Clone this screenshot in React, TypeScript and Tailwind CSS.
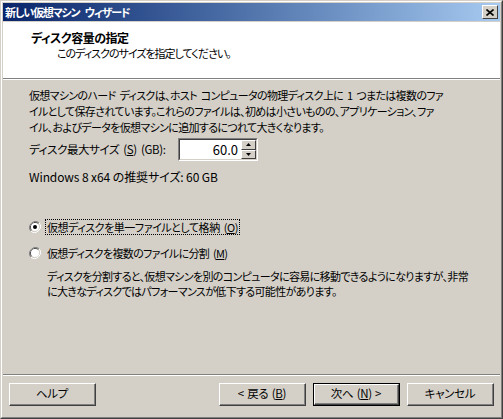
import React from 'react';

const FONT = "font-['Noto_Sans_CJK_JP',sans-serif] [font-feature-settings:'palt']";

const Radio: React.FC<{ checked?: boolean }> = ({ checked }) => (
  <svg width="12" height="12" viewBox="0 0 12 12" className="shrink-0">
    <path d="M10.2 1.8 A6 6 0 0 0 1.8 10.2" fill="none" stroke="#808080" strokeWidth="1" />
    <path d="M1.8 10.2 A6 6 0 0 0 10.2 1.8" fill="none" stroke="#ffffff" strokeWidth="1" />
    <path d="M9.5 2.5 A5 5 0 0 0 2.5 9.5" fill="none" stroke="#404040" strokeWidth="1" />
    <path d="M2.5 9.5 A5 5 0 0 0 9.5 2.5" fill="none" stroke="#d4d0c8" strokeWidth="1" />
    <circle cx="6" cy="6" r="4" fill="#ffffff" />
    {checked && <circle cx="6" cy="6" r="2" fill="#000000" />}
  </svg>
);

const Btn: React.FC<{ children: React.ReactNode; primary?: boolean }> = ({ children, primary }) => (
  <div className={primary ? 'border border-black' : ''}>
    <div
      className={
        'flex items-center justify-center border border-t-white border-l-white border-r-[#404040] border-b-[#404040] bg-[#d4d0c8] ' +
        (primary ? 'w-[85px] h-[21px]' : 'w-[87px] h-[23px]')
      }
    >
      <div className="flex items-center justify-center w-full h-full border-r border-b border-[#808080] text-[11.5px] tracking-[-0.3px] [word-spacing:1px] text-black">
        {children}
      </div>
    </div>
  </div>
);

const SpinArrow: React.FC<{ up?: boolean }> = ({ up }) => (
  <div className="flex items-center justify-center w-[15px] h-[10px] bg-[#d4d0c8] border border-t-white border-l-white border-r-[#404040] border-b-[#404040]">
    <svg width="5" height="3" viewBox="0 0 5 3">
      {up ? <path d="M2.5 0 L5 3 L0 3 Z" fill="#000" /> : <path d="M0 0 L5 0 L2.5 3 Z" fill="#000" />}
    </svg>
  </div>
);

const App: React.FC = () => {
  return (
    <div className={'w-[503px] h-[419px] overflow-hidden bg-[#d4d0c8] ' + FONT}>
      <div className="w-full h-full border border-t-[#d4d0c8] border-l-[#d4d0c8] border-r-[#404040] border-b-[#404040]">
        <div className="w-full h-full flex flex-col border border-t-white border-l-white border-r-[#808080] border-b-[#808080] p-px">
          {/* title bar */}
          <div className="h-[18px] flex items-center justify-between pl-[2px] pr-[2px] bg-gradient-to-r from-[#0a246a] to-[#a6caf0]">
            <span className="text-white font-bold text-[11px] tracking-[-1.2px] [word-spacing:4px] leading-none">
              新しい仮想マシン ウィザード
            </span>
            <div className="w-[16px] h-[14px] bg-[#d4d0c8] border border-t-white border-l-white border-r-[#404040] border-b-[#404040] flex items-center justify-center">
              <svg width="8" height="7" viewBox="0 0 8 7">
                <path d="M0.5 0.5 L7.5 6.5 M7.5 0.5 L0.5 6.5" stroke="#000" strokeWidth="1.6" />
              </svg>
            </div>
          </div>

          {/* header */}
          <div className="mt-px h-[56px] bg-white pl-[28px] pt-[8px] text-black">
            <div className="font-bold text-[12px] tracking-[-0.5px] leading-[15px]">ディスク容量の指定</div>
            <div className="pl-[26px] mt-[1px] text-[11px] tracking-[-1px] leading-[15px]">
              このディスクのサイズを指定してください。
            </div>
          </div>
          <div className="h-px bg-[#808080]" />
          <div className="h-px bg-white" />

          {/* body */}
          <div className="flex-1 flex flex-col pl-[26px] pt-[7px] text-[11px] tracking-[-0.65px] [word-spacing:2px] text-black">
            <p className="leading-[16px] whitespace-nowrap">
              仮想マシンのハード ディスクは、ホスト コンピュータの物理ディスク上に 1 つまたは複数のファ
              <br />
              イルとして保存されています。これらのファイルは、初めは小さいものの、アプリケーション、ファ
              <br />
              イル、およびデータを仮想マシンに追加するにつれて大きくなります。
            </p>

            <div className="mt-[3px] flex items-center tracking-[-0.4px] text-[11.5px]">
              <span className="w-[149px]">
                ディスク最大サイズ (<u>S</u>) (GB):
              </span>
              <div className="flex w-[80px] h-[23px] border border-t-[#808080] border-l-[#808080] border-r-white border-b-white">
                <div className="flex flex-1 border border-t-[#404040] border-l-[#404040] border-r-[#d4d0c8] border-b-[#d4d0c8] bg-white">
                  <span className="flex-1 text-right pr-[3px] text-[13px] tracking-normal leading-[19px]">60.0</span>
                  <div className="flex flex-col">
                    <SpinArrow up />
                    <SpinArrow />
                  </div>
                </div>
              </div>
            </div>

            <div className="mt-[8px] leading-[15px] text-[12px] tracking-[-0.1px] [word-spacing:0px]">
              Windows 8 x64 の推奨サイズ: 60 GB
            </div>

            <div className="mt-[35px] flex items-center h-[16px] tracking-[-0.45px]">
              <Radio checked />
              <span className="ml-[4px] px-[1px] border border-dotted border-black leading-[14px]">
                仮想ディスクを単一ファイルとして格納 (<u>O</u>)
              </span>
            </div>

            <div className="mt-[10px] flex items-center h-[16px]">
              <Radio />
              <span className="ml-[6px] leading-[14px]">
                仮想ディスクを複数のファイルに分割 (<u>M</u>)
              </span>
            </div>

            <p className="mt-[8px] pl-[18px] leading-[15px] whitespace-nowrap">
              ディスクを分割すると、仮想マシンを別のコンピュータに容易に移動できるようになりますが、非常
              <br />
              に大きなディスクではパフォーマンスが低下する可能性があります。
            </p>
          </div>

          {/* footer */}
          <div className="h-px bg-[#808080]" />
          <div className="h-px bg-white" />
          <div className="h-[40px] flex items-start pt-[7px] pl-[6px] pr-[6px]">
            <Btn>ヘルプ</Btn>
            <div className="flex-1" />
            <Btn>
              &lt; 戻る (<u>B</u>)
            </Btn>
            <div className="w-[7px]" />
            <Btn primary>
              次へ (<u>N</u>) &gt;
            </Btn>
            <div className="w-[7px]" />
            <Btn>キャンセル</Btn>
          </div>
        </div>
      </div>
    </div>
  );
};

export default App;
